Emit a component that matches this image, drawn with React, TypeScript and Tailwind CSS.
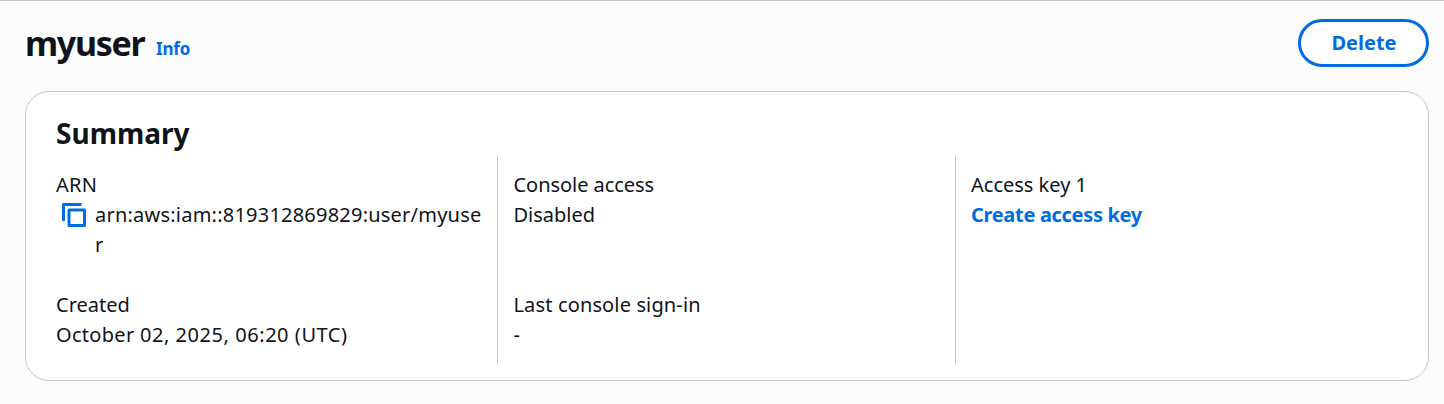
const label = "block w-fit whitespace-nowrap";

export default function App() {
  return (
    <main className="h-[404px] overflow-hidden border-t border-[#c6c6cd] bg-[#fcfcfd] pl-[25px] pr-[15px] font-['Noto_Sans',sans-serif] text-[20px] leading-[30px] text-[#0f141a]">
      <header className="flex h-[90px] items-start justify-between pt-[18px]">
        <div className="flex items-start">
          <h1 className="w-[131px] text-[34px] font-bold leading-[48px] tracking-[-1.3px]">myuser</h1>
          <a className="pt-[15px] text-[17px] font-bold tracking-[-0.2px] text-[#006ce0]">Info</a>
        </div>
        <button className="h-12 w-[131px] rounded-full border-3 border-[#006ce0] bg-white pl-px font-bold text-[#006ce0]">Delete</button>
      </header>
      <section className="h-[290px] rounded-[24px] border border-[#c6c6cd] bg-white px-[30px] pt-[23px]">
        <h2 className="text-[28px] font-bold leading-[36px]">Summary</h2>
        <div className="mt-[4px] grid h-[210px] grid-cols-[441px_458px_1fr]">
          <div className="pt-[15px]">
            <div className={label + " tracking-[0.3px]"}>ARN</div>
            <div className="flex h-[60px]">
              <svg className="ml-[5px] mr-[8px] mt-[2px]" width="26" height="26" viewBox="0 0 26 26" fill="none" stroke="#006ce0" strokeWidth="3" strokeLinejoin="round">
                <path d="M2.5 19V2.5h18M8 8h15.5v15.5H8z" />
              </svg>
              <div className="tracking-[0.22px]">arn:aws:iam::819312869829:user/myuse<br />r</div>
            </div>
            <div className={label + " mt-[30px]"}>Created</div>
            <div className={label + " tracking-[0.55px]"}>
              <span className="tracking-[0.3px]">October </span>02, 2025, 06:20 (UTC)
            </div>
          </div>
          <div className="border-l border-[#c6c6cd] pl-[15.5px] pt-[15px]">
            <div className={label + " tracking-[-0.05px]"}>Console access</div>
            <div className={label}>Disabled</div>
            <div className={label + " mt-[60px] tracking-[0.14px]"}>Last console sign-in</div>
            <div className={label}>-</div>
          </div>
          <div className="border-l border-[#c6c6cd] pl-[15px] pt-[15px]">
            <div className={label}>Access key 1</div>
            <a className={label + " font-bold tracking-[-0.32px] text-[#006ce0]"}>Create access key</a>
          </div>
        </div>
      </section>
    </main>
  );
}
